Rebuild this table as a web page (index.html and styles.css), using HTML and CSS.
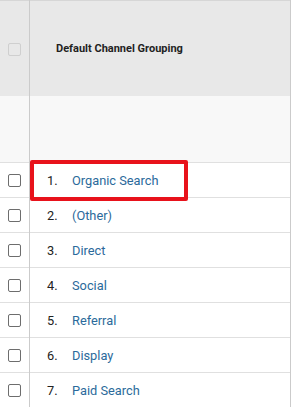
FILE: index.html
```html
<!DOCTYPE html>
<html lang="en">
<head>
    <meta charset="UTF-8">
    <meta name="viewport" content="width=device-width, initial-scale=1.0">
    <title>Channels</title>
    <link rel="stylesheet" href="styles.css">
</head>
<body>
    <table class="report-table">
        <thead>
            <tr class="head-row">
                <th class="check-col"><span class="check check-head"></span></th>
                <th class="dim-col">Default Channel Grouping</th>
            </tr>
            <tr class="summary-row">
                <td class="check-col"></td>
                <td class="dim-col"></td>
            </tr>
        </thead>
        <tbody>
            <tr>
                <td class="check-col"><span class="check"></span></td>
                <td class="dim-col highlighted">
                    <span class="num">1.</span><a class="channel">Organic Search</a>
                    <span class="highlight-box"></span>
                </td>
            </tr>
            <tr>
                <td class="check-col"><span class="check"></span></td>
                <td class="dim-col"><span class="num">2.</span><a class="channel">(Other)</a></td>
            </tr>
            <tr>
                <td class="check-col"><span class="check"></span></td>
                <td class="dim-col"><span class="num">3.</span><a class="channel">Direct</a></td>
            </tr>
            <tr>
                <td class="check-col"><span class="check"></span></td>
                <td class="dim-col"><span class="num">4.</span><a class="channel">Social</a></td>
            </tr>
            <tr>
                <td class="check-col"><span class="check"></span></td>
                <td class="dim-col"><span class="num">5.</span><a class="channel">Referral</a></td>
            </tr>
            <tr>
                <td class="check-col"><span class="check"></span></td>
                <td class="dim-col"><span class="num">6.</span><a class="channel">Display</a></td>
            </tr>
            <tr>
                <td class="check-col"><span class="check"></span></td>
                <td class="dim-col"><span class="num">7.</span><a class="channel">Paid Search</a></td>
            </tr>
        </tbody>
    </table>
</body>
</html>
```

FILE: styles.css
```css
body {
  margin: 0;
  background: #fff;
  font-family: Roboto, "Liberation Sans", sans-serif;
  color: #222;
}

.report-table {
  border-collapse: collapse;
  width: 291px;
  table-layout: fixed;
}

.report-table td,
.report-table th {
  padding: 0;
  border-top: 1px solid #e0e0e0;
}

.check-col {
  width: 29px;
  border-right: 1px solid #cbcbcb;
  text-align: left;
  vertical-align: middle;
}

.dim-col {
  border-right: 1px solid #cbcbcb;
}

.head-row th {
  height: 95px;
  background: #e8e8e8;
  border-top-color: #d6d6d6;
}

.head-row .dim-col {
  text-align: left;
  padding-left: 26px;
  font-size: 11px;
  font-weight: bold;
  color: #1f1f1f;
}

.summary-row td {
  height: 66px;
  background: #f8f8f8;
  border-top: none;
}

tbody td {
  height: 34px;
  font-size: 12.8px;
}

tbody .dim-col {
  padding-left: 17px;
  position: relative;
}

.check {
  display: block;
  width: 11px;
  height: 11px;
  margin-left: 8px;
  border: 1px solid #6d6d6d;
  border-radius: 2px;
  background: #fff;
}

.check-head {
  border-color: #cfcfcf;
  background: #e8e8e8;
  margin-top: 2px;
}

.num {
  display: inline-block;
  width: 25px;
  color: #222;
}

.channel {
  color: #2b6a9b;
}

.highlight-box {
  position: absolute;
  left: 0;
  top: -3px;
  width: 150px;
  height: 33px;
  border: 4px solid #e8121b;
  border-radius: 2px;
}
```
